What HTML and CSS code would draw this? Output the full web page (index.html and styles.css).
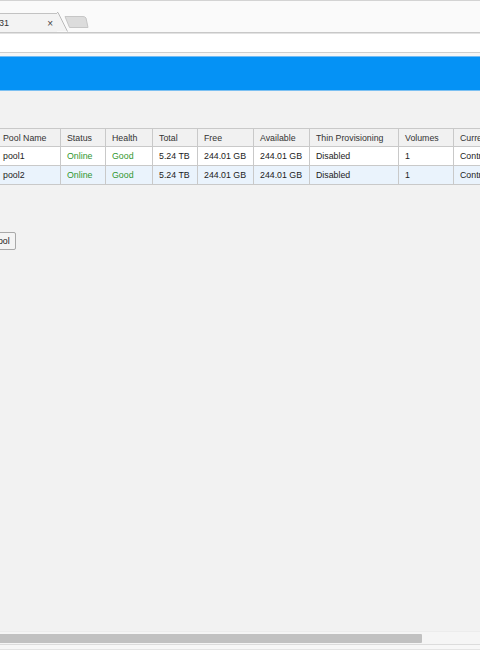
FILE: index.html
```html
<!DOCTYPE html>
<html>
<head>
<meta charset="utf-8">
<link rel="stylesheet" href="styles.css">
</head>
<body>
<div class="page">
  <div class="topline"></div>
  <div class="tabstrip">
    <div class="tab">
      <span class="tab-title">31</span>
      <span class="tab-close">×</span>
    </div>
    <svg class="tab-edge" width="34" height="20" viewBox="0 0 34 20">
      <path d="M0 0 L0.5 0 L10 19 L0 19 Z" fill="#f3f3f3"/>
      <path d="M0 0.5 L1 0.5 L10.5 19.5" fill="none" stroke="#b9b9b9" stroke-width="1"/>
      <path d="M8 4.5 L26 4.5 Q28 4.5 29 6 L31 15.5 L12.5 15.5 Z" fill="#dcdcdc" stroke="#c6c6c6" stroke-width="1"/>
    </svg>
    <div class="strip-rest"></div>
  </div>
  <div class="tabline"></div>
  <div class="addressbar"></div>
  <div class="sepline"></div>
  <div class="gap"></div>
  <div class="banner"></div>
  <div class="content">
    <table class="pools">
      <thead>
        <tr>
          <th class="c-name">Pool Name</th>
          <th class="c-status">Status</th>
          <th class="c-health">Health</th>
          <th class="c-total">Total</th>
          <th class="c-free">Free</th>
          <th class="c-avail">Available</th>
          <th class="c-thin">Thin Provisioning</th>
          <th class="c-vol">Volumes</th>
          <th class="c-cur">Current Owner</th>
        </tr>
      </thead>
      <tbody>
        <tr>
          <td>pool1</td>
          <td class="ok">Online</td>
          <td class="ok">Good</td>
          <td>5.24 TB</td>
          <td>244.01 GB</td>
          <td>244.01 GB</td>
          <td>Disabled</td>
          <td>1</td>
          <td>Controller A</td>
        </tr>
        <tr class="alt">
          <td>pool2</td>
          <td class="ok">Online</td>
          <td class="ok">Good</td>
          <td>5.24 TB</td>
          <td>244.01 GB</td>
          <td>244.01 GB</td>
          <td>Disabled</td>
          <td>1</td>
          <td>Controller B</td>
        </tr>
      </tbody>
    </table>
    <div class="actions">
      <button class="btn">Add Pool</button>
    </div>
  </div>
  <div class="hscroll">
    <div class="hthumb"></div>
  </div>
  <div class="bottomlines"></div>
</div>
</body>
</html>
```
FILE: styles.css
```css
html, body {
  margin: 0;
  padding: 0;
}
body {
  width: 480px;
  height: 650px;
  overflow: hidden;
  background: #f2f2f2;
  font-family: "Liberation Sans", Arial, sans-serif;
}
.page {
  display: flex;
  flex-direction: column;
  height: 650px;
  overflow: hidden;
}
.topline {
  height: 1px;
  background: #d3d3d3;
}
.tabstrip {
  height: 31px;
  background: #fafafa;
  display: flex;
  align-items: flex-end;
}
.tab {
  width: 57px;
  height: 19px;
  box-sizing: border-box;
  background: #f3f3f3;
  border-top: 1px solid #c2c2c2;
  display: flex;
  align-items: center;
  justify-content: space-between;
  padding: 0 4px 0 0;
  font-size: 9px;
  color: #333;
}
.tab-title {
  margin-left: -1px;
}
.tab-close {
  font-size: 10px;
  color: #444;
}
.tab-edge {
  display: block;
  flex: none;
}
.strip-rest {
  flex: 1;
}
.tabline {
  height: 1px;
  background: #c8c8c8;
  border-bottom: 1px solid #e2e2e2;
}
.addressbar {
  height: 18px;
  background: #ffffff;
}
.sepline {
  height: 1px;
  background: #cfcfcf;
}
.gap {
  height: 3px;
  background: #f6f6f6;
}
.banner {
  height: 33px;
  background: #0592f5;
  border-top: 1px solid #73bbf3;
  border-bottom: 1px solid #7cc0f2;
}
.content {
  flex: 1;
  padding-top: 37px;
  background: #f2f2f2;
  overflow: hidden;
}
.pools {
  border-collapse: collapse;
  margin-left: -4px;
  table-layout: fixed;
  width: 544px;
  font-size: 8.8px;
  color: #222;
}
.pools th,
.pools td {
  border: 1px solid #c9c9c9;
  height: 19px;
  padding: 0 6px;
  text-align: left;
  white-space: nowrap;
  overflow: hidden;
  box-sizing: border-box;
}
.pools th {
  height: 18px;
  font-weight: normal;
  color: #333;
  background: #f1f1f1;
}
.pools td {
  background: #ffffff;
}
.pools tr.alt td {
  background: #eaf3fc;
}
.pools td.ok {
  color: #2f962f;
}
.c-name { width: 64px; }
.c-status { width: 45px; }
.c-health { width: 47px; }
.c-total { width: 45px; }
.c-free { width: 56px; }
.c-avail { width: 56px; }
.c-thin { width: 89px; }
.c-vol { width: 55px; }
.c-cur { width: 87px; }
.actions {
  margin-top: 45px;
  margin-left: -32px;
}
.btn {
  font-family: "Liberation Sans", Arial, sans-serif;
  font-size: 8.8px;
  color: #222;
  height: 18px;
  padding: 0 5px;
  background: #f4f4f4;
  border: 1px solid #a9a9a9;
  border-radius: 2px;
}
.hscroll {
  height: 12px;
  background: #f5f5f5;
  border-top: 1px solid #ececec;
  display: flex;
  align-items: center;
}
.hthumb {
  width: 422px;
  height: 9px;
  background: #c1c1c1;
  border-radius: 0 1px 1px 0;
}
.bottomlines {
  height: 6px;
  border-top: 1px solid #dcdcdc;
  border-bottom: 1px solid #e4e4e4;
  background: #f7f7f7;
  box-sizing: border-box;
}
```
